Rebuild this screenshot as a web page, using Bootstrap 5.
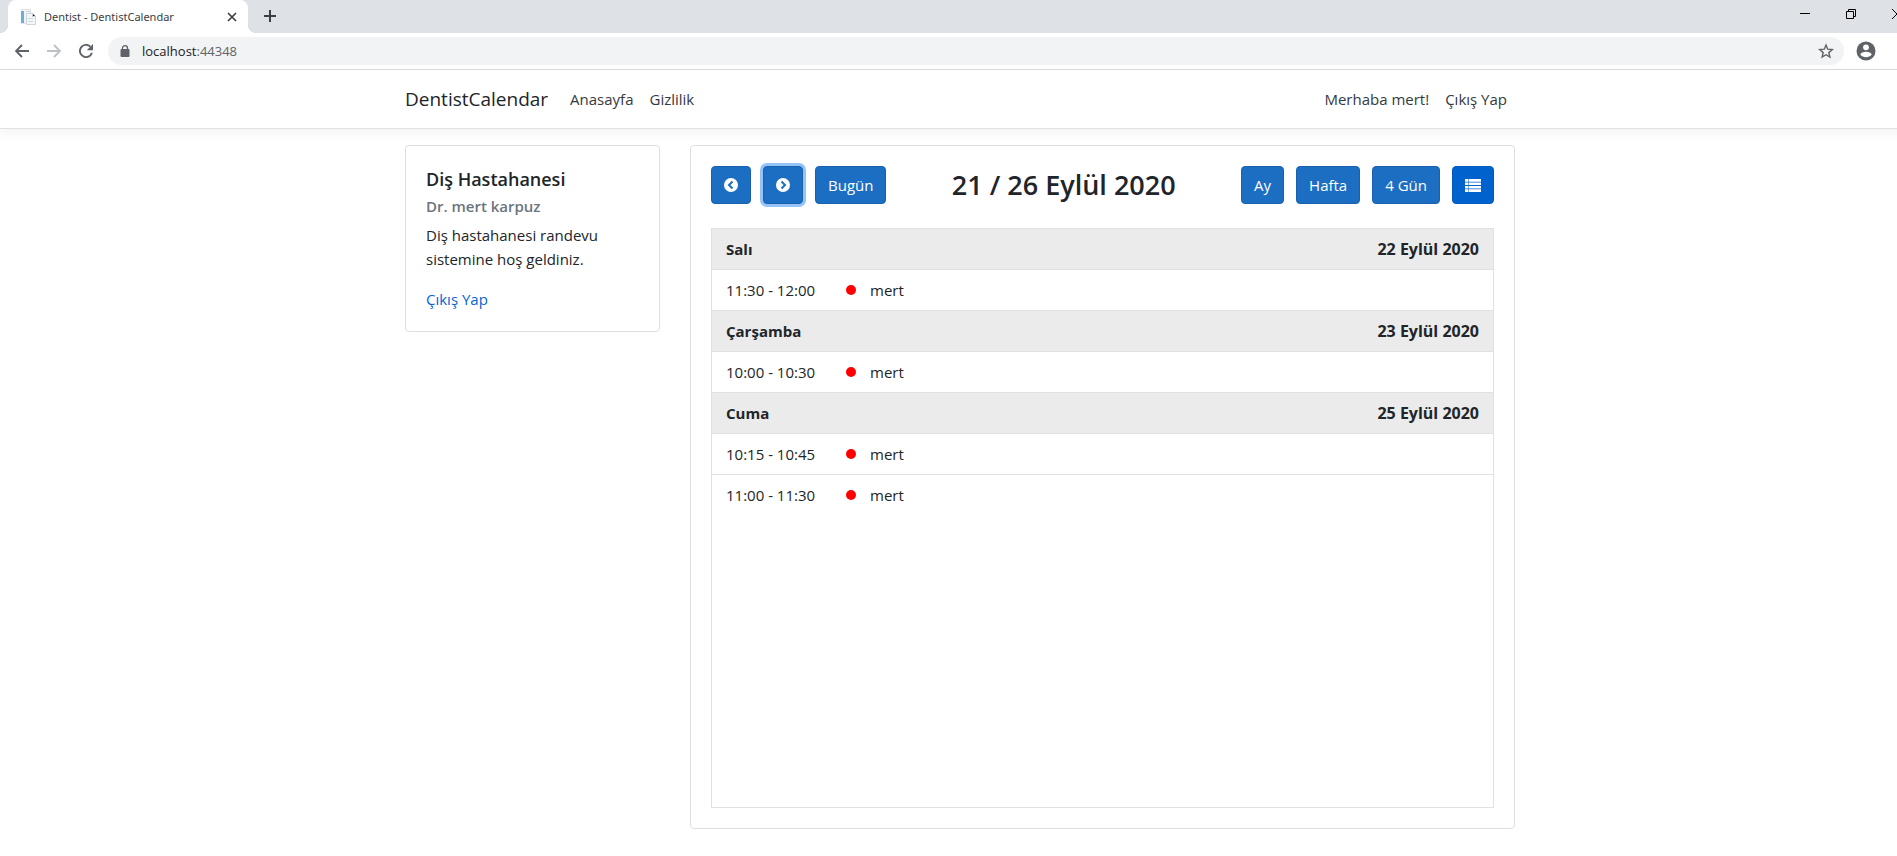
<!DOCTYPE html>
<html lang="tr">
<head>
<meta charset="utf-8">
<meta name="viewport" content="width=device-width, initial-scale=1">
<title>Dentist - DentistCalendar</title>
<link href="https://cdn.jsdelivr.net/npm/bootstrap@5.3.0/dist/css/bootstrap.min.css" rel="stylesheet">
<style>
  body { font-family: "Open Sans", "Noto Sans", sans-serif; font-size: 15px; line-height: 24px; color: #212529; background: #fff; overflow-x: hidden; }
  a { text-decoration: none; color: #0366d6; }
  /* the maximised window reaches past the right edge of the view */
  .window-frame { width: calc(100% + 23px); }
  .icon-btn { border: 0; background: none; padding: 0; display: flex; align-items: center; justify-content: center; flex: none; }
  .icon-btn svg, .btn svg { display: block; }

  .tab-strip { height: 33px; background: #dee1e6; }
  .tab-active { position: relative; width: 240px; height: 33px; margin-left: 8px; padding: 0 8px 0 12px; background: #fff; border-radius: 8px 8px 0 0; font-family: "Noto Sans", sans-serif; font-size: 11px; color: #3c4043; }
  .tab-active::before, .tab-active::after { content: ""; position: absolute; bottom: 0; width: 8px; height: 8px; }
  .tab-active::before { left: -8px; background: radial-gradient(circle at 0 0, #dee1e6 8px, #fff 8px); }
  .tab-active::after { right: -8px; background: radial-gradient(circle at 100% 0, #dee1e6 8px, #fff 8px); }
  .tab-close { width: 16px; height: 16px; }
  .tab-new { width: 28px; height: 32px; margin-left: 8px; }
  .caption-btn { width: 46px; height: 28px; }

  .tool-bar { height: 37px; border-bottom: 1px solid #dadce0; padding: 0 38px 0 6px; }
  .nav-icon { width: 32px; height: 32px; }
  .address { height: 28px; margin: 0 6px; padding: 0 10px 0 12px; border-radius: 14px; background: #f1f3f4; font-size: 13px; color: #5f6368; }
  .address-host { color: #202124; }

  .page-width { width: 100%; max-width: 1140px; margin: 0 auto; padding: 0 15px; }
  .site-nav { min-height: 59px; padding: 8px 0; background: #fff; border-bottom: 1px solid #dee2e6; box-shadow: 0 4px 12px rgba(0, 0, 0, .05); }
  .site-nav .navbar-brand { font-size: 19px; color: #212529; margin-right: 14px; padding: 5px 0; }
  .site-nav .nav-link { color: #343a40; font-size: 15px; padding: 8px; }

  .page-row { --bs-gutter-x: 30px; }
  .panel { border: 1px solid #dfdfdf; border-radius: 4px; }
  .panel .card-body { padding: 20px; }
  .clinic-name { font-size: 18px; line-height: 26px; font-weight: 600; margin-bottom: 4px; }
  .doctor-name { font-size: 15px; line-height: 21px; font-weight: 600; color: #6c757d; margin-bottom: 6px; }

  .cal-head { margin-bottom: 24px; }
  .cal-group { gap: 12px; }
  .cal-title { font-size: 27px; line-height: 34px; font-weight: 600; margin: 0; }
  .btn-cal { height: 38px; font-size: 15px; line-height: 24px; padding: 6px 12px; color: #fff; background: #1b6ec2; border: 1px solid #1861ac; border-radius: 4px; }
  .btn-cal:hover { color: #fff; background: #0062cc; }
  .btn-cal.is-focused { box-shadow: 0 0 0 3px #94c3fb; }
  .btn-cal.is-current { background: #0062cc; border-color: #005cbf; }

  .list-view { aspect-ratio: 1.35; border: 1px solid #dfe1e4; }
  .list-view table { width: 100%; margin: 0; border-collapse: collapse; }
  .list-view th, .list-view td { padding: 8px 14px; border-bottom: 1px solid #dfe1e4; }
  .list-view tr:last-child td { border-bottom: 0; }
  .list-view th { background: #ebebeb; font-weight: 700; }
  .day-date { font-size: 16px; }
  .time-cell { width: 120px; white-space: nowrap; }
  .list-view .dot-cell { width: 38px; }
  .list-view .title-cell { padding-left: 0; }
  .event-dot { display: block; width: 10px; height: 10px; border-radius: 5px; background: #f00; }
</style>
</head>
<body>
<div class="window-frame">
  <header>
    <div class="tab-strip d-flex align-items-start">
      <div class="tab-active d-flex align-items-center">
        <svg width="16" height="16" viewBox="0 0 16 16" aria-hidden="true"><path fill="#f1f3f5" stroke="#dde2e6" d="M1.500.5h9v14h-9z"/><path fill="#6aaedb" d="M1 2h3v12H1z"/><path fill="#f4f6f8" stroke="#d0d5da" d="M6.500 4.500h6l3 3v8h-9z"/><path stroke="#d0d5da" d="M8 9.500h5M8 12.500h5M6 2.500h4M12.500 4.500v3h3"/></svg>
        <span class="flex-grow-1 ps-2">Dentist - DentistCalendar</span>
        <button class="icon-btn tab-close" type="button" aria-label="Sekmeyi kapat"><svg width="10" height="10" viewBox="0 0 10 10"><path d="M1 1l8 8M9 1L1 9" stroke="#3c4043" stroke-width="1.700"/></svg></button>
      </div>
      <button class="icon-btn tab-new" type="button" aria-label="Yeni sekme"><svg width="12" height="12" viewBox="0 0 12 12"><path d="M6 0v12M0 6h12" stroke="#3c4043" stroke-width="2"/></svg></button>
      <div class="d-flex ms-auto">
        <button class="icon-btn caption-btn" type="button" aria-label="Simge durumuna küçült"><svg width="10" height="10" viewBox="0 0 10 10"><path d="M0 4.500h10" stroke="#000"/></svg></button>
        <button class="icon-btn caption-btn" type="button" aria-label="Önceki boyut"><svg width="10" height="10" viewBox="0 0 10 10"><path d="M.5 2.500h7v7h-7zM2.500 2.500v-2h7v7h-2" fill="none" stroke="#000"/></svg></button>
        <button class="icon-btn caption-btn" type="button" aria-label="Kapat"><svg width="10" height="10" viewBox="0 0 10 10"><path d="M0 0l10 10M10 0L0 10" stroke="#000"/></svg></button>
      </div>
    </div>
    <div class="tool-bar d-flex align-items-center">
      <button class="icon-btn nav-icon" type="button" aria-label="Geri"><svg width="14" height="14" viewBox="0 0 14 14"><path d="M14 7H1.500M7 1L1 7l6 6" fill="none" stroke="#5f6368" stroke-width="1.900"/></svg></button>
      <button class="icon-btn nav-icon" type="button" aria-label="İleri"><svg width="14" height="14" viewBox="0 0 14 14"><path d="M0 7h12.500M7 1l6 6-6 6" fill="none" stroke="#bdc1c6" stroke-width="1.900"/></svg></button>
      <button class="icon-btn nav-icon" type="button" aria-label="Yenile"><svg width="14" height="14" viewBox="0 0 14 14"><path d="M12.900 8.700A6.100 6.100 0 1 1 11.400 2.700" fill="none" stroke="#5f6368" stroke-width="1.900"/><path d="M14 0v6.200H7.800z" fill="#5f6368"/></svg></button>
      <div class="address d-flex align-items-center flex-grow-1">
        <svg width="10" height="12" viewBox="0 0 10 12" aria-hidden="true"><path d="M2.500 5V3.200a2.500 2.500 0 0 1 5 0V5" fill="none" stroke="#5f6368" stroke-width="1.300"/><rect x=".5" y="4" width="9" height="8" rx="1" fill="#5f6368"/></svg>
        <span class="flex-grow-1 ps-2 ms-1"><span class="address-host">localhost</span>:44348</span>
        <button class="icon-btn" type="button" aria-label="Yer işareti"><svg width="16" height="16" viewBox="0 0 16 16"><path d="M8 2l1.700 4.200 4.600.4-3.500 3 1.100 4.500L8 11.700l-3.900 2.400 1.100-4.500-3.500-3 4.600-.4z" fill="none" stroke="#5f6368" stroke-width="1.400"/></svg></button>
      </div>
      <button class="icon-btn nav-icon" type="button" aria-label="Profil"><svg width="20" height="20" viewBox="0 0 20 20"><circle cx="10" cy="10" r="9.500" fill="#5f6368"/><circle cx="10" cy="6.300" r="2.900" fill="#fff"/><path d="M4.300 13.500c.8-3.700 10.600-3.700 11.400 0-2.600 3.700-8.800 3.700-11.400 0z" fill="#fff"/></svg></button>
    </div>
  </header>

  <nav class="site-nav navbar navbar-expand mb-3">
    <div class="page-width d-flex align-items-center">
      <a class="navbar-brand" href="#">DentistCalendar</a>
      <ul class="navbar-nav">
        <li class="nav-item"><a class="nav-link" href="#">Anasayfa</a></li>
        <li class="nav-item"><a class="nav-link" href="#">Gizlilik</a></li>
      </ul>
      <ul class="navbar-nav ms-auto">
        <li class="nav-item"><a class="nav-link" href="#">Merhaba mert!</a></li>
        <li class="nav-item"><button class="nav-link border-0 bg-transparent" type="button">Çıkış Yap</button></li>
      </ul>
    </div>
  </nav>

  <main class="page-width">
    <div class="row page-row align-items-start">
      <aside class="col-3">
        <div class="card panel">
          <div class="card-body">
            <h5 class="clinic-name">Diş Hastahanesi</h5>
            <h6 class="doctor-name">Dr. mert karpuz</h6>
            <p class="mb-3">Diş hastahanesi randevu sistemine hoş geldiniz.</p>
            <a class="d-block" href="#">Çıkış Yap</a>
          </div>
        </div>
      </aside>
      <section class="col-9">
        <div class="card panel">
          <div class="card-body">
            <div class="cal-head d-flex align-items-center justify-content-between">
              <div class="cal-group d-flex">
                <button class="btn btn-cal" type="button" aria-label="Önceki"><svg width="14" height="14" viewBox="0 0 14 14"><circle cx="7" cy="7" r="7" fill="#fff"/><path d="M8.500 3.500L5 7l3.500 3.500" fill="none" stroke="#1b6ec2" stroke-width="2"/></svg></button>
                <button class="btn btn-cal is-focused" type="button" aria-label="Sonraki"><svg width="14" height="14" viewBox="0 0 14 14"><circle cx="7" cy="7" r="7" fill="#fff"/><path d="M5.500 3.500L9 7l-3.500 3.500" fill="none" stroke="#1b6ec2" stroke-width="2"/></svg></button>
                <button class="btn btn-cal" type="button">Bugün</button>
              </div>
              <h2 class="cal-title">21 / 26 Eylül 2020</h2>
              <div class="cal-group d-flex">
                <button class="btn btn-cal" type="button">Ay</button>
                <button class="btn btn-cal" type="button">Hafta</button>
                <button class="btn btn-cal" type="button">4 Gün</button>
                <button class="btn btn-cal is-current" type="button" aria-label="Liste"><svg width="16" height="13" viewBox="0 0 16 13"><path fill="#fff" d="M0 0h3v2.700H0zM3.500 0H16v2.700H3.500zM0 3.400h3v2.700H0zM3.500 3.400H16v2.700H3.500zM0 6.900h3v2.700H0zM3.500 6.900H16v2.700H3.500zM0 10.300h3V13H0zM3.500 10.300H16V13H3.500z"/></svg></button>
              </div>
            </div>
            <div class="list-view">
              <table>
                <tbody>
                  <tr><th colspan="3"><div class="d-flex justify-content-between"><span>Salı</span><span class="day-date">22 Eylül 2020</span></div></th></tr>
                  <tr><td class="time-cell">11:30 - 12:00</td><td class="dot-cell"><span class="event-dot"></span></td><td class="title-cell">mert</td></tr>
                  <tr><th colspan="3"><div class="d-flex justify-content-between"><span>Çarşamba</span><span class="day-date">23 Eylül 2020</span></div></th></tr>
                  <tr><td class="time-cell">10:00 - 10:30</td><td class="dot-cell"><span class="event-dot"></span></td><td class="title-cell">mert</td></tr>
                  <tr><th colspan="3"><div class="d-flex justify-content-between"><span>Cuma</span><span class="day-date">25 Eylül 2020</span></div></th></tr>
                  <tr><td class="time-cell">10:15 - 10:45</td><td class="dot-cell"><span class="event-dot"></span></td><td class="title-cell">mert</td></tr>
                  <tr><td class="time-cell">11:00 - 11:30</td><td class="dot-cell"><span class="event-dot"></span></td><td class="title-cell">mert</td></tr>
                </tbody>
              </table>
            </div>
          </div>
        </div>
      </section>
    </div>
  </main>
</div>
<script src="https://cdn.jsdelivr.net/npm/bootstrap@5.3.0/dist/js/bootstrap.bundle.min.js"></script>
</body>
</html>
